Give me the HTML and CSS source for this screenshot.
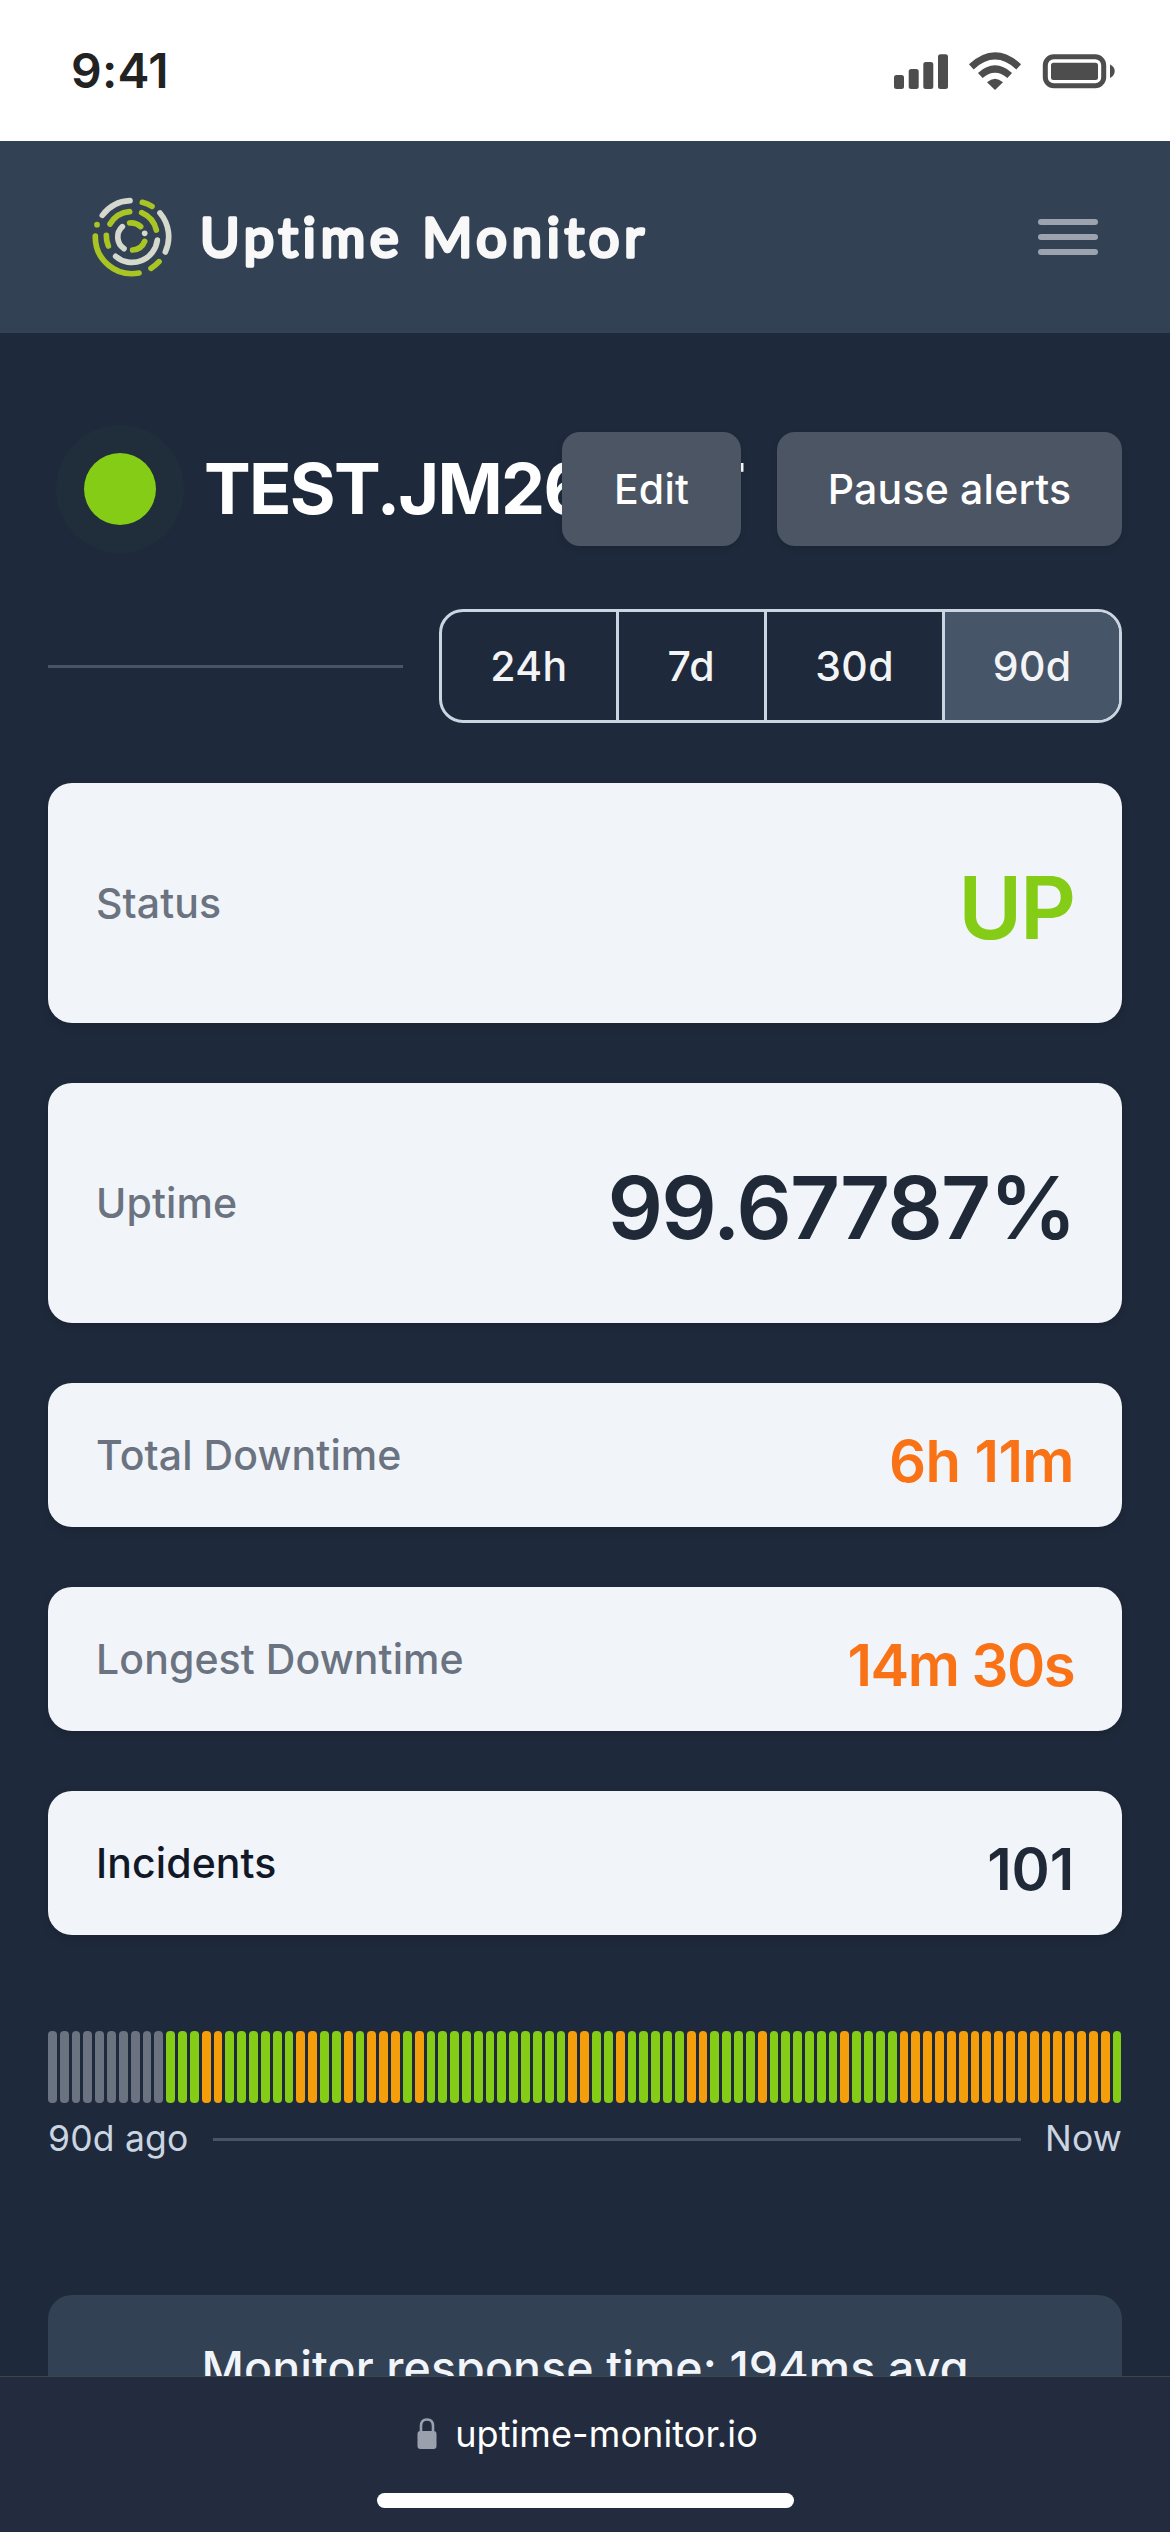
FILE: index.html
```html
<!DOCTYPE html>
<html lang="en">
<head>
    <meta charset="UTF-8">
    <title>Uptime Monitor</title>
    <link rel="stylesheet" href="styles.css">
</head>
<body>
    <div class="status-bar">
        <div class="time">9:41</div>
        <svg class="status-icons" width="224" height="40" viewBox="893 51 224 40">
            <g fill="#4d4d4d">
                <rect x="894" y="75" width="10" height="14" rx="2.5"/>
                <rect x="908.7" y="69" width="10" height="20" rx="2.5"/>
                <rect x="923.3" y="62" width="10" height="27" rx="2.5"/>
                <rect x="938" y="54.3" width="10" height="34.7" rx="2.5"/>
                <path d="M995 90 L987 82.3 Q995 75 1003 82.3 Z"/>
                <rect x="1051" y="62.7" width="47" height="17.3" rx="2.5"/>
                <path d="M1110 64.5 Q1114.7 66.5 1114.7 71 Q1114.7 75.5 1110 78 Z"/>
            </g>
            <g fill="none" stroke="#4d4d4d">
                <path stroke-width="7" d="M980.3 75.5 Q995 62.5 1009.7 75.5"/>
                <path stroke-width="7" d="M971.3 66.8 Q995 45 1018.7 66.8"/>
                <rect x="1045.3" y="56.7" width="58.4" height="29" rx="8.5" stroke-width="5"/>
            </g>
        </svg>
    </div>

    <header class="header">
        <svg class="logo" width="80" height="80" viewBox="97 51 240 240">
            <g fill="none" stroke-width="17" stroke-linecap="round">
                <g stroke="#d5d8cc">
                    <path d="M128 106 A110 110 0 0 1 211 62"/>
                    <path d="M301 99 A110 110 0 0 1 317 216"/>
                    <path d="M293 180 A76 76 0 0 1 168 229"/>
                    <path d="M193 206 A42 42 0 0 1 188 140"/>
                    <path d="M255 160 h0.1"/>
                </g>
                <g stroke="#a9c523">
                    <path d="M248 67 A110 110 0 0 1 277 79"/>
                    <path d="M298 245 A110 110 0 0 1 274 265"/>
                    <path d="M238 279 A110 110 0 0 1 107 168"/>
                    <path d="M112 134 h0.1"/>
                    <path d="M151 132 A76 76 0 0 1 210 95"/>
                    <path d="M246 98 A76 76 0 0 1 290 150"/>
                    <path d="M146 198 A76 76 0 0 1 140 166"/>
                    <path d="M210 129 A42 42 0 0 1 243 140"/>
                    <path d="M255 184 A42 42 0 0 1 219 210"/>
                </g>
            </g>
        </svg>
        <svg class="wordmark" width="450" height="80" viewBox="0 0 450 80">
            <text x="0" y="60" textLength="444">Uptime Monitor</text>
        </svg>
        <div class="menu-button">
            <span></span>
            <span></span>
            <span></span>
        </div>
    </header>

    <main class="content">
        <div class="title-row">
            <div class="dot"></div>
            <h1>TEST.JM26.NET</h1>
            <div class="title-actions">
                <button>Edit</button>
                <button>Pause alerts</button>
            </div>
        </div>

        <div class="range-row">
            <div class="line"></div>
            <div class="range">
                <button>24h</button>
                <button>7d</button>
                <button>30d</button>
                <button class="active">90d</button>
            </div>
        </div>

        <div class="cards">
            <div class="card big">
                <div class="label">Status</div>
                <div class="value up">UP</div>
            </div>
            <div class="card big">
                <div class="label">Uptime</div>
                <div class="value percent">99.67787%</div>
            </div>
            <div class="card">
                <div class="label">Total Downtime</div>
                <div class="value warn total">6h 11m</div>
            </div>
            <div class="card">
                <div class="label">Longest Downtime</div>
                <div class="value warn">14m 30s</div>
            </div>
            <div class="card">
                <div class="label dark">Incidents</div>
                <div class="value count">101</div>
            </div>
        </div>

        <div class="bars" id="bars"></div>
        <div class="bars-legend">
            <span>90d ago</span>
            <div class="line"></div>
            <span>Now</span>
        </div>

        <div class="chart">
            <h2>Monitor response time: 194ms avg</h2>
        </div>
    </main>

    <div class="browser-bar">
        <div class="address">
            <svg width="20" height="32" viewBox="0 0 20 32">
                <rect x="0.5" y="13" width="19" height="18" rx="3" fill="#9ba1ac"/>
                <path d="M4 14 V8 Q4 1.5 10 1.5 Q16 1.5 16 8 V14" fill="none" stroke="#9ba1ac" stroke-width="2.6"/>
            </svg>
            <span>uptime-monitor.io</span>
        </div>
        <div class="home-indicator"></div>
    </div>

    <script>
        const bars = document.getElementById('bars');

        // [state, number of days]
        const history = [
            ['none', 10], ['ok', 3], ['warn', 2], ['ok', 6], ['warn', 2], ['ok', 2],
            ['warn', 1], ['ok', 1], ['warn', 3], ['ok', 1], ['warn', 1], ['ok', 12],
            ['warn', 2], ['ok', 2], ['warn', 1], ['ok', 5], ['warn', 2], ['ok', 4],
            ['warn', 1], ['ok', 6], ['warn', 1], ['ok', 4], ['warn', 18], ['ok', 1],
        ];

        history.forEach(([state, days]) => {
            for (let i = 0; i < days; i++) {
                const bar = document.createElement('span');
                bar.className = 'bar ' + state;
                bars.appendChild(bar);
            }
        });
    </script>
</body>
</html>
```
FILE: styles.css
```css
* {
    box-sizing: border-box;
}

body {
    margin: 0;
    width: 1170px;
    height: 2532px;
    display: flex;
    flex-direction: column;
    overflow: hidden;
    background: #1e293b;
    color: #fff;
    font-family: Inter, sans-serif;
}

h1, h2 {
    margin: 0;
    white-space: nowrap;
}

button {
    font: inherit;
    color: inherit;
    letter-spacing: inherit;
    border: none;
    padding: 0;
    white-space: nowrap;
}

/* phone status bar */
.status-bar {
    flex: none;
    height: 141px;
    padding: 0 53px 0 71px;
    display: flex;
    align-items: center;
    justify-content: space-between;
    background: #fff;
    color: #222;
}

.time {
    font-size: 48px;
    font-weight: 600;
    letter-spacing: 0.3px;
}

/* header */
.header {
    flex: none;
    height: 192px;
    padding: 0 72px 0 92px;
    display: flex;
    align-items: center;
    background: #334155;
}

.wordmark {
    margin-left: 28px;
}

.wordmark text {
    font-family: Lato, sans-serif;
    font-size: 54px;
    font-weight: 400;
    font-variant-ligatures: none;
    fill: #f8f8f8;
    stroke: #f8f8f8;
    stroke-width: 3.6px;
    stroke-linejoin: round;
}

.menu-button {
    margin-left: auto;
    width: 60px;
    display: flex;
    flex-direction: column;
    gap: 9px;
}

.menu-button span {
    height: 6px;
    border-radius: 3px;
    background: #9ca3af;
}

.content {
    flex: 1;
    min-height: 0;
    overflow: hidden;
    padding: 99px 48px 0;
}

/* monitor name and buttons */
.title-row {
    height: 114px;
    padding-left: 36px;
    display: flex;
    align-items: center;
}

.dot {
    flex: none;
    width: 72px;
    height: 72px;
    border-radius: 50%;
    background: #84cc16;
    box-shadow: 0 0 0 28px rgba(132, 204, 22, 0.025);
}

.title-row h1 {
    width: 358px;
    margin-left: 48px;
    font-size: 70px;
    font-weight: 700;
    line-height: 1;
    letter-spacing: -1.7px;
}

.title-actions {
    flex: none;
    position: relative;
    display: flex;
    gap: 36px;
}

.title-actions button {
    width: 345px;
    height: 114px;
    border-radius: 18px;
    background: #4b5563;
    font-size: 41px;
    font-weight: 500;
    letter-spacing: 0.2px;
    box-shadow: 0 3px 6px rgba(0, 0, 0, 0.1);
}

.title-actions button:first-child {
    width: 179px;
}

/* range switch */
.range-row {
    margin-top: 63px;
    display: flex;
    align-items: center;
    gap: 36px;
}

.line {
    flex: 1;
    height: 3px;
    background: #475569;
}

.range {
    width: 683px;
    height: 114px;
    display: flex;
    border: 3px solid #cbd5e1;
    border-radius: 24px;
    overflow: hidden;
    color: #f3f4f6;
    font-size: 41px;
    font-weight: 500;
    letter-spacing: 0.4px;
}

.range button {
    flex: 176 0 0;
    background: none;
    border-right: 3px solid #cbd5e1;
}

.range button:nth-child(2) {
    flex-grow: 147;
}

.range button:nth-child(3) {
    flex-grow: 178;
}

.range .active {
    border-right: none;
    background: #475569;
}

/* stats */
.cards {
    margin-top: 60px;
    display: flex;
    flex-direction: column;
    gap: 60px;
}

.card {
    height: 144px;
    padding: 0 48px;
    display: flex;
    align-items: center;
    justify-content: space-between;
    border-radius: 24px;
    background: #f1f5f9;
    color: #1f2937;
    box-shadow: 0 3px 9px rgba(0, 0, 0, 0.15);
}

.card.big {
    height: 240px;
}

.label {
    padding-bottom: 1px;
    font-size: 41px;
    font-weight: 500;
    letter-spacing: 0.1px;
    color: #6b7280;
}

.label.dark {
    color: #111827;
}

.value {
    padding-top: 12px;
    font-size: 58px;
    font-weight: 600;
    letter-spacing: -1.5px;
}

.big .value {
    padding-top: 8px;
    font-size: 87px;
    letter-spacing: -2.2px;
}

.big .value.percent {
    margin-right: -1px;
    letter-spacing: -1.8px;
}

.value.total {
    letter-spacing: -0.6px;
}

.value.count {
    letter-spacing: -0.2px;
}

.value.up {
    color: #84cc16;
}

.value.warn {
    color: #f97316;
}

/* history */
.bars {
    height: 72px;
    margin-top: 96px;
    display: flex;
    gap: 3px;
}

.bar {
    flex: 1;
    border-radius: 4px;
    background: #6b7280;
}

.bar.ok {
    background: #84cc16;
}

.bar.warn {
    background: #f59e0b;
}

.bars-legend {
    height: 48px;
    margin-top: 12px;
    display: flex;
    align-items: center;
    gap: 24px;
    color: #cbd5e1;
    font-size: 35.5px;
    letter-spacing: 0.2px;
}

.bars-legend span {
    padding-bottom: 2px;
}

.chart {
    height: 400px;
    margin-top: 132px;
    padding-top: 45px;
    border-radius: 24px;
    background: #334155;
    color: #f1f5f9;
    text-align: center;
}

.chart h2 {
    font-size: 46.5px;
    font-weight: 500;
    letter-spacing: 0.1px;
}

/* bottom of the browser */
.browser-bar {
    flex: none;
    height: 156px;
    display: flex;
    flex-direction: column;
    align-items: center;
    border-top: 1px solid #3f444b;
    background: #222c3e;
}

.address {
    height: 116px;
    padding: 0 0 2px 5px;
    display: flex;
    align-items: center;
    gap: 18px;
    font-size: 36px;
    letter-spacing: 0.1px;
}

.home-indicator {
    width: 417px;
    height: 15px;
    border-radius: 8px;
    background: #fff;
}
```
